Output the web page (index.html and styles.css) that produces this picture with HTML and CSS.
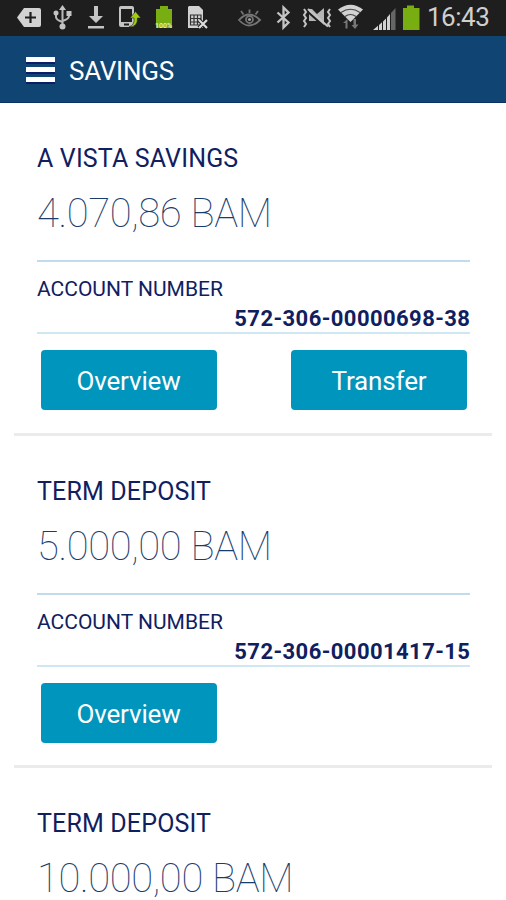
FILE: index.html
```html
<!DOCTYPE html>
<html lang="en">
<head>
<meta charset="utf-8">
<title>Savings</title>
<link rel="stylesheet" href="styles.css">
</head>
<body>
<div class="status">
  <svg class="icons" viewBox="0 0 426 36" width="426" height="36" aria-hidden="true">
    <path d="M17 17.500 24 8H39Q41 8 41 10V25Q41 27 39 27H24Z" fill="#d2d2d2"/>
    <path d="M25 17.500H36M30.500 12V23" stroke="#1e1e1e" stroke-width="2.200"/>
    <g stroke="#b9b9b9" stroke-width="2" fill="none">
      <path d="M62.500 9V26M56 13V17Q56 20 62.500 22M69 13V16Q69 19 62.500 21"/>
    </g>
    <g fill="#c4c4c4">
      <path d="M62.500 5 66 10H59ZM66.500 11H71.500V16H66.500Z"/><circle cx="56" cy="13" r="2.500"/><circle cx="62.500" cy="26.500" r="3"/>
      <path d="M94 6H98V16H103L96 23 89 16H94ZM88 26H104V28.500H88Z"/>
      <path fill-rule="evenodd" d="M121 6H132Q134 6 134 8V25Q134 27 132 27H121Q119 27 119 25V8Q119 6 121 6ZM121 9V22H132V9ZM124 23.500V25.500H129V23.500Z"/>
    </g>
    <path d="M129 27Q135 25 134 18H130L135.500 11.500 141 18H137.500Q138 27 129 27Z" fill="#9fca16" stroke="#1e1e1e" stroke-width=".6"/>
    <path d="M160 6H168V9H172V28H156V9H160Z" fill="#79ae12"/>
    <text x="163.500" y="27.500" class="percent">100%</text>
    <path d="M189 6H199L203 10V28H188V7Z" fill="#d2d2d2"/>
    <path d="M190.500 15H201V25H190.500ZM190.500 18.500H201M190.500 22H201M194 15V25M197.500 15V25" stroke="#333" stroke-width="1.200" fill="none"/>
    <path d="M199 20 207 28M207 20 199 28" stroke="#1e1e1e" stroke-width="4"/>
    <path d="M199 20 207 28M207 20 199 28" stroke="#ddd" stroke-width="2.200"/>
    <g stroke="#747474" fill="none" stroke-width="1.800">
      <path d="M239 20Q249 9 260 20Q249 31 239 20ZM249.500 9.500V13M241 11 243.500 14.500M258 11 255.500 14.500"/>
      <circle cx="249.500" cy="19.500" r="3.500"/>
    </g>
    <circle cx="249.500" cy="19.500" r="1.600" fill="#999"/>
    <path d="M277.500 12.500 288.500 22.500 283.500 27.500V7.500L288.500 12.500 277.500 22.500" stroke="#c4c4c4" stroke-width="2.300" fill="none"/>
    <path d="M309 9H312L317 14 324 8V26L318 21H309Z" fill="#b5b5b5"/>
    <path d="M308 12 327 29" stroke="#1e1e1e" stroke-width="2"/>
    <path d="M308 9 328 26.500" stroke="#c4c4c4" stroke-width="2.200"/>
    <path d="M304 9 306 12 304 15 306 18 304 21 306 24 304 27M330 9 328 12 330 15 328 18 330 21 328 24 330 27" stroke="#c4c4c4" stroke-width="2" fill="none"/>
    <path d="M338 9.500Q350.500 0 363 9.500L350.500 22Z" fill="#d2d2d2"/>
    <path d="M341 12.500Q350.500 6 360 12.500M345 16.500Q350.500 12.500 356 16.500" fill="none" stroke="#444" stroke-width="1.200"/>
    <path d="M345.500 28.500V23H343L347.500 19V28.500ZM353.500 19H356V24.500H358.500L355 29 351.500 25H353.500Z" fill="#777"/>
    <path d="M373 30 378 25.800V30ZM379 25 382 22.300V30H379Z" fill="#d2d2d2"/>
    <path d="M383 21.500 386 18.500V30H383ZM387 17.500 390 14V30H387Z" fill="#d2d2d2"/>
    <path d="M391 13 395.500 8V30H391Z" fill="#666"/>
    <path d="M407 5.500H414V8H419.500V30H403V8H407Z" fill="#79ae12"/>
  </svg>
  <span class="clock">16:43</span>
</div>
<header class="bar">
  <span class="menu"><i></i><i></i><i></i></span>
  <h1>SAVINGS</h1>
</header>
<main>
  <section class="account">
    <h2>A VISTA SAVINGS</h2>
    <p class="amount">4.070,86 BAM</p>
    <div class="details"><span class="label">ACCOUNT NUMBER</span><span class="number">572-306-00000698-38</span></div>
    <div class="actions"><button>Overview</button><button>Transfer</button></div>
  </section>
  <section class="account">
    <h2>TERM DEPOSIT</h2>
    <p class="amount">5.000,00 BAM</p>
    <div class="details"><span class="label">ACCOUNT NUMBER</span><span class="number">572-306-00001417-15</span></div>
    <div class="actions"><button>Overview</button></div>
  </section>
  <section class="account last">
    <h2>TERM DEPOSIT</h2>
    <p class="amount">10.000,00 BAM</p>
  </section>
</main>
</body>
</html>
```
FILE: styles.css
```css
* { box-sizing: border-box; margin: 0; }
body { height: 900px; background: #fff; font-family: Roboto, sans-serif; color: #10205f; }
.status { height: 36px; display: flex; background: #1e1e1e; }
.icons { display: block; flex: none; }
.percent { font: bold 7px Roboto, sans-serif; fill: #dfe8cf; text-anchor: middle; }
.clock { font-size: 26px; line-height: 35px; color: #cfcfcf; margin-left: 1px; letter-spacing: -.5px; }
.bar { height: 67px; display: flex; align-items: center; padding: 3px 26px 0; background: #104573; border-bottom: 1px solid #0b3264; }
.menu { display: flex; flex-direction: column; gap: 5px; width: 29px; margin: -2px 14px 0 0; }
.menu i { height: 5px; background: #fff; box-shadow: 0 2px #0a1f68; }
h1 { font-size: 26px; font-weight: 400; letter-spacing: -.25px; color: #fff; }
.account { height: 332.500px; margin: 0 14px; padding: 41px 22px 0 23px; border-bottom: 3px solid #ebebeb; }
.account.last { height: auto; border: 0; }
h2 { font-size: 25px; line-height: 30px; font-weight: 400; letter-spacing: .15px; }
.amount { font-size: 40px; line-height: 38px; font-weight: 100; letter-spacing: -.38px; margin-top: 21px; color: #183c6c; }
.details { display: flex; flex-direction: column; height: 74px; margin-top: 27px; border-top: 2px solid #c0dcec; border-bottom: 2px solid #cfe7f3; padding-top: 12px; }
.label { font-size: 21px; line-height: 30px; }
.number { font-size: 22px; line-height: 30px; font-weight: 700; letter-spacing: .43px; margin-right: -.43px; align-self: flex-end; }
.actions { display: flex; justify-content: space-between; padding: 16px 3px 0 3.500px; }
button { width: 176px; height: 60px; padding: 2px 0 0; border: 0; border-radius: 4px; background: #0095bc; color: #fff; font: 400 26px Roboto, sans-serif; letter-spacing: -.15px; }
```
